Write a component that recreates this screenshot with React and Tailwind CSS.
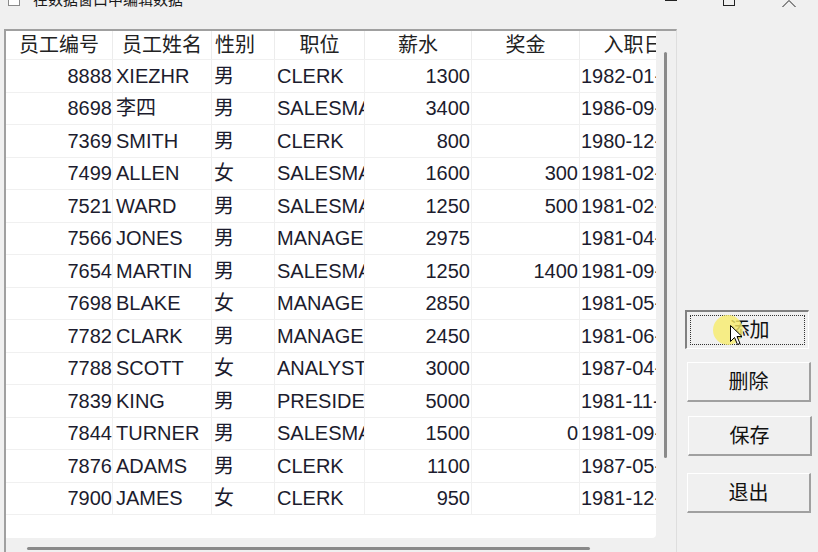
import React from 'react';

const cols = [
  { title: '员工编号', w: 'w-[107px]', head: 'justify-center', cell: 'justify-end pr-0' },
  { title: '员工姓名', w: 'w-[99px]', head: 'justify-center', cell: 'justify-start pl-[3px]' },
  { title: '性别', w: 'w-[63px]', head: 'justify-start pl-[3px]', cell: 'justify-start pl-[2px]' },
  { title: '职位', w: 'w-[90px]', head: 'justify-center', cell: 'justify-start pl-[2px]' },
  { title: '薪水', w: 'w-[107px]', head: 'justify-center', cell: 'justify-end pr-[1px]' },
  { title: '奖金', w: 'w-[108px]', head: 'justify-center', cell: 'justify-end pr-[1px]' },
  { title: '入职日期', w: 'w-[128px]', head: 'justify-center', cell: 'justify-start pl-[1px]' },
];

const rows = [
  ['8888', 'XIEZHR', '男', 'CLERK', '1300', '', '1982-01-23'],
  ['8698', '李四', '男', 'SALESMAN', '3400', '', '1986-09-10'],
  ['7369', 'SMITH', '男', 'CLERK', '800', '', '1980-12-17'],
  ['7499', 'ALLEN', '女', 'SALESMAN', '1600', '300', '1981-02-20'],
  ['7521', 'WARD', '男', 'SALESMAN', '1250', '500', '1981-02-22'],
  ['7566', 'JONES', '男', 'MANAGER', '2975', '', '1981-04-02'],
  ['7654', 'MARTIN', '男', 'SALESMAN', '1250', '1400', '1981-09-28'],
  ['7698', 'BLAKE', '女', 'MANAGER', '2850', '', '1981-05-01'],
  ['7782', 'CLARK', '男', 'MANAGER', '2450', '', '1981-06-09'],
  ['7788', 'SCOTT', '女', 'ANALYST', '3000', '', '1987-04-19'],
  ['7839', 'KING', '男', 'PRESIDENT', '5000', '', '1981-11-17'],
  ['7844', 'TURNER', '男', 'SALESMAN', '1500', '0', '1981-09-08'],
  ['7876', 'ADAMS', '男', 'CLERK', '1100', '', '1987-05-23'],
  ['7900', 'JAMES', '女', 'CLERK', '950', '', '1981-12-03'],
];

function Btn({ label, className = '' }) {
  return (
    <div
      className={`w-[124px] h-[40px] flex items-center justify-center bg-[#f0f0f0] border-t border-l border-t-white border-l-white border-b-2 border-r-2 border-b-[#a0a0a0] border-r-[#a0a0a0] text-[20px] text-[#111] ${className}`}
    >
      {label}
    </div>
  );
}

export default function App() {
  return (
    <div className="relative w-[818px] h-[552px] overflow-hidden bg-[#f0f0f0] font-['Liberation_Sans','Noto_Sans_CJK_SC',sans-serif] text-[#1c1c2e]">
      {/* title bar, cut off at the top */}
      <div className="flex items-start h-[29px] text-[#1a1a1a]">
        <div className="ml-[8px] -mt-[6px] w-[12px] h-[12px] border border-[#8a8a8a] bg-white" />
        <span className="ml-[13px] -mt-[9px] text-[15px] leading-[17px]">在数据窗口中编辑数据</span>
        <div className="ml-auto flex items-start">
          <div className="mr-[46px] w-[12px] h-px bg-[#222]" />
          <div className="mr-[47px] -mt-[6px] w-[12px] h-[12px] border border-[#222]" />
          <svg width="14" height="8" viewBox="0 0 14 8" className="mr-[22px]">
            <path d="M0.5 7 L7 0.5 L13.5 7" fill="none" stroke="#222" strokeWidth="1" />
          </svg>
        </div>
      </div>

      <div className="flex h-[523px]">
        {/* grid control */}
        <div className="ml-[4px] w-[673px] flex border-t-2 border-l-2 border-t-[#a0a0a0] border-l-[#a0a0a0] border-r border-r-[#dedede]">
          <div className="w-[650px] flex flex-col">
            <div className="h-[507px] bg-white overflow-hidden rounded-br-[4px]">
              <div className="flex h-[29px] border-b border-[#f0f0f0]">
                {cols.map((c) => (
                  <div
                    key={c.title}
                    className={`${c.w} shrink-0 flex items-center whitespace-nowrap overflow-hidden border-r border-[#ececec] text-[20px] text-[#222] ${c.head}`}
                  >
                    {c.title}
                  </div>
                ))}
              </div>
              {rows.map((r) => (
                <div key={r[0]} className="flex h-[32.5px] border-b border-[#f0f0f0]">
                  {r.map((v, i) => (
                    <div
                      key={i}
                      className={`${cols[i].w} shrink-0 flex items-center whitespace-nowrap overflow-hidden border-r border-[#f0f0f0] text-[20px] ${cols[i].cell}`}
                    >
                      {v}
                    </div>
                  ))}
                </div>
              ))}
            </div>
            <div className="flex-1 pt-[9px] pl-[21px]">
              <div className="w-[563px] h-[3px] bg-[#8a8a8a] rounded-full" />
            </div>
          </div>
          <div className="flex-1 pt-[21px] pl-[8px]">
            <div className="w-[3px] h-[406px] bg-[#8a8a8a] rounded-full" />
          </div>
        </div>

        {/* buttons */}
        <div className="flex flex-col pt-[281px]">
          <div className="relative ml-[8px] w-[124px] h-[39px] p-[3px] bg-[#f0f0f0] border-t-2 border-l-2 border-t-[#808080] border-l-[#808080] border-b border-r border-b-white border-r-white">
            <div className="w-full h-full border border-dotted border-[#333] flex items-center justify-center text-[20px] text-[#111] pl-[4px]">
              添加
            </div>
            <div className="absolute left-[26px] top-[3px] w-[30px] h-[30px] rounded-full bg-[#f7ec6c]/80" />
            <svg className="absolute left-[43px] top-[13px]" width="13" height="21" viewBox="0 0 13 21">
              <path d="M0.5 0.5 L0.5 16.5 L4.5 12.5 L7.5 19.5 L10 18.5 L7 11.5 L12 11.5 Z" fill="#fff" stroke="#000" strokeWidth="1" strokeLinejoin="miter" />
            </svg>
          </div>
          <Btn label="删除" className="ml-[10px] mt-[13px]" />
          <Btn label="保存" className="ml-[11px] mt-[14px] h-[39px]" />
          <Btn label="退出" className="ml-[10px] mt-[17px] h-[39px]" />
        </div>
      </div>
    </div>
  );
}
